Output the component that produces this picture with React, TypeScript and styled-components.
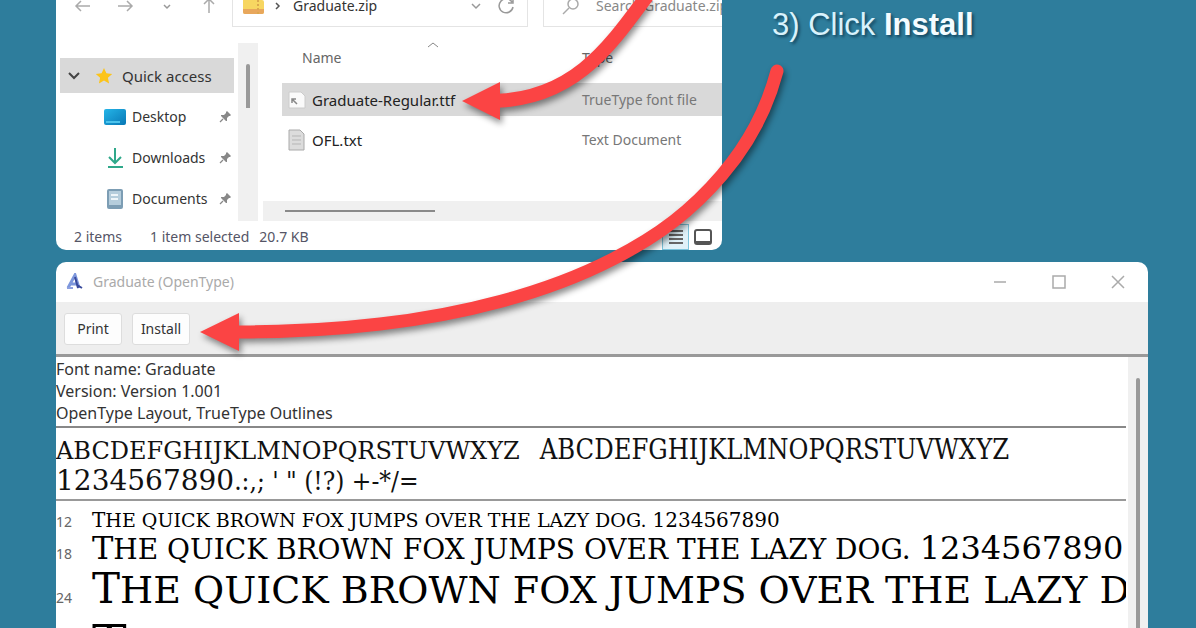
import React from "react";
import styled, { createGlobalStyle } from "styled-components";

const Global = createGlobalStyle`
  * { box-sizing: border-box; }
  body {
    margin: 0;
    background: #2e7d9c;
    font-family: "Noto Sans", "Open Sans", sans-serif;
    font-size: 14px;
    line-height: 20px;
    color: #333;
  }
  button, input { font: inherit; color: inherit; }
`;

const Desktop = styled.main`
  position: relative;
  height: 100vh;
  overflow: hidden;
  padding: 0 48px 0 56px;
  display: flex;
  flex-direction: column;
  gap: 12px;
`;

const TopRow = styled.div`
  display: flex;
  gap: 50px;
  flex: none;
`;

const Explorer = styled.section`
  flex: 0 1 666px;
  min-width: 0;
  background: #fff;
  border-radius: 0 0 10px 10px;
  overflow: hidden;
`;

const Step = styled.p`
  margin: 8px 0 0;
  flex: none;
  font-family: "Liberation Sans", Arial, sans-serif;
  font-size: 31px;
  line-height: 34px;
  color: #d8f2fc;
  text-shadow: 2px 2px 3px rgba(0, 30, 50, 0.6);
  strong { color: #f4fcff; }
`;

const NavBar = styled.div`
  display: flex;
  align-items: center;
  height: 42px;
  margin: -15px 0 16px;
`;

const NavButtons = styled.div`
  display: flex;
  width: 176px;
  padding-left: 16px;
  gap: 20px;
`;

const IconButton = styled.button<{ $active?: boolean }>`
  display: flex;
  align-items: center;
  justify-content: center;
  width: 22px;
  height: 26px;
  padding: 0;
  border: 1px solid ${(p) => (p.$active ? "#7cc4dc" : "transparent")};
  background: ${(p) => (p.$active ? "#dff1f8" : "none")};
  color: #999;
`;

const Field = styled.div<{ $grow?: boolean }>`
  display: flex;
  align-items: center;
  flex: ${(p) => (p.$grow ? "1 1 0" : "0 0 296px")};
  min-width: 0;
  height: 42px;
  padding: 0 ${(p) => (p.$grow ? 0 : 10)}px 0 10px;
  gap: 8px;
  border: 1px solid #e4e4e4;
  border-right-width: ${(p) => (p.$grow ? 0 : 1)}px;
  margin-right: ${(p) => (p.$grow ? 0 : 15)}px;
`;

const Path = styled.span`
  flex: 1;
  padding-left: 1px;
`;

const Search = styled.input`
  flex: 1;
  min-width: 0;
  border: 0;
  padding: 0;
  margin-left: 8px;
  outline: 0;
  &::placeholder { color: #888; opacity: 1; }
`;

const Body = styled.div`
  display: flex;
  height: 178px;
`;

const Side = styled.nav`
  width: 182px;
  padding: 15px 4px 0;
`;

const SideGroup = styled.button`
  display: flex;
  align-items: center;
  width: 100%;
  height: 35px;
  margin-bottom: 3px;
  padding: 0 8px;
  gap: 9px;
  border: 0;
  background: #d9d9d9;
  font-size: 15px;
  white-space: nowrap;
  svg:first-child { margin-right: 6px; }
`;

const SideLink = styled.a`
  display: flex;
  align-items: center;
  height: 41px;
  padding: 0 2px 0 44px;
  gap: 6px;
  color: inherit;
  text-decoration: none;
  span { flex: 1; }
`;

const Track = styled.div`
  flex: none;
  width: 20px;
  padding: 21px 0 0 8px;
  background: #f0f0f0;
`;

const Thumb = styled.div<{ $fill?: boolean }>`
  width: 4px;
  height: ${(p) => (p.$fill ? "100%" : "44px")};
  border-radius: 2px 2px 0 0;
  background: #999;
`;

const Files = styled.div`
  display: flex;
  flex-direction: column;
  flex: 1;
  min-width: 0;
  padding-left: 5px;
`;

const Table = styled.table`
  width: calc(100% - 19px);
  margin-left: 19px;
  border-collapse: separate;
  border-spacing: 0 7px;
  table-layout: fixed;
`;

const Head = styled.th<{ $indent: number }>`
  position: relative;
  width: ${(p) => (p.$indent ? "auto" : "140px")};
  height: 26px;
  padding: 0 0 10px ${(p) => p.$indent}px;
  line-height: 16px;
  text-align: left;
  font-weight: 400;
  color: #666;
`;

const SortMark = styled.svg`
  position: absolute;
  top: -9px;
  left: 145px;
`;

const Row = styled.tr<{ $selected?: boolean }>`
  background: ${(p) => (p.$selected ? "#d9d9d9" : "none")};
  td { height: 33px; padding: 0; color: #777; white-space: nowrap; }
`;

const FileName = styled.div`
  display: flex;
  align-items: center;
  gap: 6px;
  padding-left: 6px;
  font-size: 15px;
  color: #222;
`;

const HTrack = styled.div`
  margin-top: auto;
  height: 20px;
  padding: 9px 22px;
  background: #f0f0f0;
`;

const HThumb = styled.div`
  width: 150px;
  height: 2px;
  background: #8a8a8a;
`;

const Status = styled.footer`
  display: flex;
  align-items: center;
  height: 29px;
  padding: 2px 6px 0 18px;
  color: #556;
  span { margin-right: 28px; }
  span + span { margin-right: 10px; }
  button:first-of-type { margin-left: auto; }
  button { width: 27px; color: #444; }
`;

const Viewer = styled.section`
  flex: 1 0 auto;
  display: flex;
  flex-direction: column;
  border-radius: 10px 10px 0 0;
  background: #fff;
  overflow: hidden;
`;

const TitleBar = styled.header`
  display: flex;
  align-items: center;
  height: 40px;
  padding: 0 19px 0 10px;
  gap: 9px;
  color: #aaa;
  h1 { flex: 1; margin: 0; font-size: 14px; font-weight: 400; }
  button { margin-left: 28px; }
`;

const Toolbar = styled.div`
  display: flex;
  height: 52px;
  padding: 11px 8px;
  gap: 10px;
  background: #eee;
`;

const PushButton = styled.button`
  width: 58px;
  height: 32px;
  padding: 0;
  border: 1px solid #ddd;
  border-radius: 3px;
  background: #fdfdfd;
`;

const Pane = styled.div`
  display: flex;
  border-top: 3px solid #999;
`;

const Sheet = styled.div`
  flex: 1;
  min-width: 0;
  overflow: hidden;
  margin-right: 2px;
  white-space: nowrap;
`;

const Info = styled.div`
  height: 71px;
  padding-top: 1px;
  border-bottom: 2px solid #888;
  font-size: 16px;
  line-height: 22px;
`;

const Glyphs = styled.div`
  height: 73px;
  padding-top: 5px;
  border-bottom: 2px solid #999;
  color: #111;
`;

const GlyphLine = styled.div<{ $gap: number }>`
  display: flex;
  align-items: baseline;
  gap: ${(p) => p.$gap}px;
  height: 31px;
  line-height: 34px;
`;

const GlyphRun = styled.span<{ $size: number; $narrow?: boolean }>`
  font-size: ${(p) => p.$size}px;
  font-family: ${(p) => (p.$narrow ? '"DejaVu Serif Condensed", ' : "")}"DejaVu Serif", serif;
`;

const Samples = styled.div`
  padding-top: 6px;
`;

const Sample = styled.div<{ $size: number; $cap: number; $height: number }>`
  display: grid;
  grid-template-columns: 36px auto;
  align-items: baseline;
  height: ${(p) => p.$height}px;
  line-height: ${(p) => p.$height}px;
  font-family: "DejaVu Serif", serif;
  font-size: ${(p) => p.$size}px;
  color: #000;
  p { margin: 0; }
  p::first-letter, b { font-weight: 400; font-size: ${(p) => p.$cap}px; line-height: 1px; }
`;

const Pt = styled.span`
  font-family: "Noto Sans", sans-serif;
  font-size: 14px;
  color: #666;
`;

const Overlay = styled.svg`
  position: absolute;
  left: 0;
  top: 0;
  pointer-events: none;
  filter: drop-shadow(2px 4px 3px rgba(0, 0, 0, 0.45));
`;

const Chevron = ({ d = "M2 4l4 4 4-4", color = "#999", w = 1.5 }) => (
  <svg width="12" height="12" viewBox="0 0 12 12" fill="none" stroke={color} strokeWidth={w}><path d={d} /></svg>
);

const Arrow = ({ turn = 0 }) => (
  <svg width="18" height="18" viewBox="0 0 18 18" fill="none" stroke="#aaa" strokeWidth="1.5">
    <path d="M16 9H2M7 4L2 9l5 5" transform={`rotate(${turn} 9 9)`} />
  </svg>
);

const Pin = () => (
  <svg width="13" height="13" viewBox="0 0 13 13">
    <path d="M8 1l4 4-1 1-1 0-2 2 0 3-1 0-5-5 0-1 3 0 2-2 0-1z" fill="#888" />
    <path d="M4 9l-3 3" stroke="#888" strokeWidth="1.3" />
  </svg>
);

const Star = () => (
  <svg width="18" height="18" viewBox="0 0 18 18">
    <path d="M9 1l2.4 5.3 5.8.6-4.3 3.9 1.2 5.7L9 13.6l-5.1 2.9 1.2-5.7L.8 6.9l5.8-.6z" fill="#fcc419" />
  </svg>
);

const DesktopIcon = () => (
  <svg width="22" height="18" viewBox="0 0 22 18">
    <defs><linearGradient id="desk" x2="1" y2="1"><stop stopColor="#25b5e8" /><stop offset="1" stopColor="#0877b5" /></linearGradient></defs>
    <rect y="1" width="22" height="16" rx="2" fill="url(#desk)" />
    <path d="M2 14h14" stroke="#4cc3ec" strokeWidth="2" />
  </svg>
);

const DownloadIcon = () => (
  <svg width="22" height="20" viewBox="0 0 22 20" fill="none" stroke="#2fa88a" strokeWidth="2">
    <path d="M11 0v14M5 9l6 6 6-6M4 19h15" />
  </svg>
);

const DocumentIcon = () => (
  <svg width="22" height="20" viewBox="0 0 22 20">
    <rect x="3" width="16" height="20" rx="2" fill="#7c9db4" />
    <rect x="5" y="2" width="12" height="14" fill="#b5cddc" />
    <path d="M7 6h7M7 10h7" stroke="#eef5f9" strokeWidth="2" />
  </svg>
);

const ZipIcon = () => (
  <svg width="21" height="16" viewBox="0 0 21 16">
    <path d="M0 2q0-2 2-2h6l2 2h9q2 0 2 2v10q0 2-2 2H2q-2 0-2-2z" fill="#f7d661" />
    <path d="M0 11h21v3q0 2-2 2H2q-2 0-2-2z" fill="#e8a75c" />
    <path d="M15 2v14" stroke="#dba84e" strokeWidth="2" strokeDasharray="2 2" />
  </svg>
);

const FontFileIcon = () => (
  <svg width="18" height="18" viewBox="0 0 18 18">
    <path d="M1 1h12l4 4v12H1z" fill="#fafafa" stroke="#ccc" />
    <path d="M4 8l5 5M4 12V8h4" stroke="#888" strokeWidth="1.5" fill="none" />
  </svg>
);

const TextFileIcon = () => (
  <svg width="18" height="22" viewBox="0 0 18 22">
    <path d="M1 1h11l4 4v16H1z" fill="#dcdcdc" stroke="#aaa" />
    <path d="M4 7h9M4 11h9M4 15h9" stroke="#b5b5b5" />
  </svg>
);

const FontLogo = () => (
  <svg width="18" height="18" viewBox="0 0 18 18" fill="none">
    <path d="M2 15L9 2l4 13M5 11h8" stroke="#7d97dc" strokeWidth="3" />
    <path d="M9 4l3 11M11 12l5 3" stroke="#394a9c" strokeWidth="2" />
    <path d="M1 15h6" stroke="#8c9fe0" strokeWidth="2" />
  </svg>
);

const places = [
  { name: "Desktop", icon: <DesktopIcon /> },
  { name: "Downloads", icon: <DownloadIcon /> },
  { name: "Documents", icon: <DocumentIcon /> },
];

const samples = [
  { pt: 12, size: 19, cap: 20, height: 27 },
  { pt: 18, size: 28, cap: 32, height: 31 },
  { pt: 24, size: 38, cap: 42, height: 50 },
  { pt: 36, size: 44, cap: 52, height: 64 },
];

export default function App() {
  return (
    <>
      <Global />
      <Desktop>
        <TopRow>
          <Explorer aria-label="File Explorer">
            <NavBar>
              <NavButtons>
                <IconButton aria-label="Back"><Arrow /></IconButton>
                <IconButton aria-label="Forward"><Arrow turn={180} /></IconButton>
                <IconButton aria-label="Recent"><Chevron d="M3 5l3 3 3-3" /></IconButton>
                <IconButton aria-label="Up"><Arrow turn={90} /></IconButton>
              </NavButtons>
              <Field>
                <ZipIcon />
                <Chevron d="M4 3l3 3-3 3" color="#555" />
                <Path>Graduate.zip</Path>
                <IconButton aria-label="Previous locations"><Chevron /></IconButton>
                <IconButton aria-label="Refresh">
                  <svg width="18" height="18" viewBox="0 0 18 18" fill="none" stroke="#999" strokeWidth="1.5">
                    <path d="M15 5A7 7 0 1 0 16 10M16 1v5h-5" />
                  </svg>
                </IconButton>
              </Field>
              <Field $grow>
                <svg width="26" height="18" viewBox="0 0 26 18" fill="none" stroke="#aaa" strokeWidth="1.5">
                  <circle cx="19" cy="7" r="5" /><path d="M15 11l-6 6" />
                </svg>
                <Search aria-label="Search" placeholder="Search Graduate.zip" />
              </Field>
            </NavBar>
            <Body>
              <Side>
                <SideGroup>
                  <Chevron d="M1 3l5 5 5-5" color="#444" w={2} />
                  <Star />
                  Quick access
                </SideGroup>
                {places.map((p) => (
                  <SideLink href="#" key={p.name}>{p.icon}<span>{p.name}</span><Pin /></SideLink>
                ))}
              </Side>
              <Track><Thumb /></Track>
              <Files>
                <Table>
                  <thead>
                    <tr>
                      <Head $indent={20}>Name<SortMark width="12" height="8" viewBox="0 0 12 8" fill="none" stroke="#888"><path d="M1 6l5-4 5 4" /></SortMark></Head>
                      <Head $indent={0}>Type</Head>
                    </tr>
                  </thead>
                  <tbody>
                    <Row $selected>
                      <td><FileName><FontFileIcon />Graduate-Regular.ttf</FileName></td>
                      <td>TrueType font file</td>
                    </Row>
                    <Row>
                      <td><FileName><TextFileIcon />OFL.txt</FileName></td>
                      <td>Text Document</td>
                    </Row>
                  </tbody>
                </Table>
                <HTrack><HThumb /></HTrack>
              </Files>
            </Body>
            <Status>
              <span>2 items</span>
              <span>1 item selected</span>
              <span>20.7 KB</span>
              <IconButton $active aria-label="Details view">
                <svg width="16" height="16" viewBox="0 0 16 16" stroke="#666" strokeWidth="2"><path d="M1 2h14M1 6h14M1 10h14M1 14h14" /></svg>
              </IconButton>
              <IconButton aria-label="Large icons view">
                <svg width="18" height="18" viewBox="0 0 18 18" fill="none" stroke="#555" strokeWidth="2"><rect x="1" y="2" width="16" height="14" rx="2" /><path d="M2 14h14" /></svg>
              </IconButton>
            </Status>
          </Explorer>
          <Step>3) Click <strong>Install</strong></Step>
        </TopRow>

        <Viewer aria-label="Font viewer">
          <TitleBar>
            <FontLogo />
            <h1>Graduate (OpenType)</h1>
            <IconButton aria-label="Minimize"><svg width="14" height="14" viewBox="0 0 14 14" stroke="#aaa" strokeWidth="1.5"><path d="M1 7h12" /></svg></IconButton>
            <IconButton aria-label="Maximize"><svg width="14" height="14" viewBox="0 0 14 14" fill="none" stroke="#aaa" strokeWidth="1.5"><rect x="1" y="1" width="12" height="12" /></svg></IconButton>
            <IconButton aria-label="Close"><svg width="14" height="14" viewBox="0 0 14 14" stroke="#aaa" strokeWidth="1.5"><path d="M1 1l12 12M13 1L1 13" /></svg></IconButton>
          </TitleBar>
          <Toolbar>
            <PushButton>Print</PushButton>
            <PushButton>Install</PushButton>
          </Toolbar>
          <Pane>
            <Sheet>
              <Info>
                <div>Font name: Graduate</div>
                <div>Version: Version 1.001</div>
                <div>OpenType Layout, TrueType Outlines</div>
              </Info>
              <Glyphs>
                <GlyphLine $gap={20}>
                  <GlyphRun $size={24}>ABCDEFGHIJKLMNOPQRSTUVWXYZ</GlyphRun>
                  <GlyphRun $size={27} $narrow>ABCDEFGHIJKLMNOPQRSTUVWXYZ</GlyphRun>
                </GlyphLine>
                <GlyphLine $gap={0}>
                  <GlyphRun $size={28}>1234567890</GlyphRun>
                  <GlyphRun $size={26} $narrow>.:,; ' " (!?) +-*/=</GlyphRun>
                </GlyphLine>
              </Glyphs>
              <Samples>
                {samples.map((s) => (
                  <Sample key={s.pt} $size={s.size} $cap={s.cap} $height={s.height}>
                    <Pt>{s.pt}</Pt>
                    <p>THE QUICK BROWN FOX JUMPS OVER THE LAZY DOG. <b>1234567890</b></p>
                  </Sample>
                ))}
              </Samples>
            </Sheet>
            <Track><Thumb $fill /></Track>
          </Pane>
        </Viewer>

        <Overlay width="800" height="360" viewBox="0 0 800 360" fill="none" stroke="#fb4444" strokeWidth="14">
          <path d="M650 -8C610 46 575 99 494 101" />
          <path d="M462 101l38-19v38z" fill="#fb4444" stroke="none" />
          <path d="M777 71C768 105 752 140 722 175C692 210 660 235 613 259C545 294 460 315 380 324C330 330 280 332 236 332" strokeWidth="13" strokeLinecap="round" />
          <path d="M200 332l39-19v38z" fill="#fb4444" stroke="none" />
        </Overlay>
      </Desktop>
    </>
  );
}
